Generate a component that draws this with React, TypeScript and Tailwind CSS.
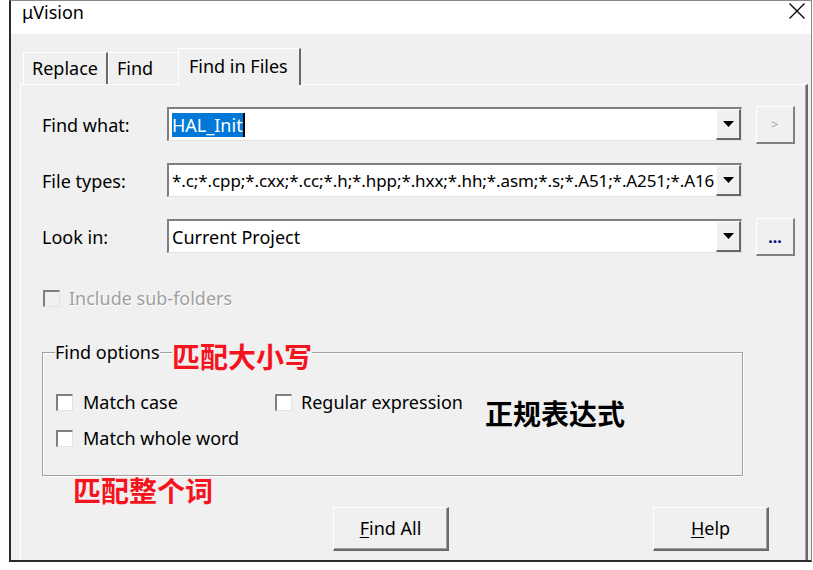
import React from "react";

function ComboBox({ children }: { children: React.ReactNode }) {
  return (
    <div className="mt-[1px] flex h-[34px] w-[575px] border-t-2 border-l-2 border-r border-b border-t-[#7f7f7f] border-l-[#7f7f7f] border-r-[#e3e3e3] border-b-[#e3e3e3] bg-white">
      <div className="flex min-w-0 flex-1 items-center overflow-hidden whitespace-nowrap pl-[3px] text-[18px] leading-[24px]">
        {children}
      </div>
      <div className="flex w-[25px] items-center justify-center border-t border-l border-r-2 border-b-2 border-t-white border-l-white border-r-[#696969] border-b-[#696969] bg-[#f0f0f0]">
        <svg width="11" height="6" viewBox="0 0 11 6">
          <polygon points="0,0 11,0 5.5,6" fill="#000" />
        </svg>
      </div>
    </div>
  );
}

function SideButton({ children, disabled }: { children: React.ReactNode; disabled?: boolean }) {
  return (
    <div
      className={`flex h-[38px] w-[39px] items-center justify-center border-t border-l border-r-2 border-b-2 border-t-white border-l-white border-r-[#808080] border-b-[#808080] bg-[#f0f0f0] ${
        disabled ? "text-[13px] text-[#a0a0a0] [text-shadow:1px_1px_0_#fff]" : "text-[16px] font-bold text-[#000080]"
      }`}
    >
      {children}
    </div>
  );
}

function CheckBox({ disabled }: { disabled?: boolean }) {
  return (
    <div
      className={`h-[17px] w-[17px] shrink-0 border-t-2 border-l-2 border-r border-b border-t-[#7f7f7f] border-l-[#7f7f7f] border-r-[#e3e3e3] border-b-[#e3e3e3] ${
        disabled ? "bg-[#f0f0f0]" : "bg-white"
      }`}
    />
  );
}

function PushButton({ hot, rest }: { hot: string; rest: string }) {
  return (
    <div className="flex h-[44px] w-[116px] items-center justify-center border-t border-l border-r-2 border-b-2 border-t-white border-l-white border-r-[#6b6b6b] border-b-[#6b6b6b] bg-[#f0f0f0] text-[18px] shadow-[inset_-1px_-1px_0_#a0a0a0]">
      <span className="underline underline-offset-2">{hot}</span>
      {rest}
    </div>
  );
}

export default function App() {
  return (
    <div className="h-[570px] w-[813px] bg-white font-['Noto_Sans','Noto_Sans_CJK_SC',sans-serif] text-black">
      <div className="ml-[9px] flex h-[562px] w-[803px] flex-col border-l-2 border-t border-r border-b-2 border-l-[#2b2b2b] border-t-[#8a8a8a] border-r-[#8a8a8a] border-b-[#2b2b2b]">
        {/* Title bar */}
        <div className="flex h-[33px] items-start justify-between bg-white pl-[11px] pr-[6px]">
          <span className="text-[18px] leading-[22px]">μVision</span>
          <svg width="16" height="16" viewBox="0 0 16 16" className="mt-[2px]">
            <path d="M0.5 0.5 L15.5 15.5 M15.5 0.5 L0.5 15.5" stroke="#000" strokeWidth="1.3" />
          </svg>
        </div>

        <div className="flex flex-1 flex-col bg-[#f0f0f0]">
          {/* Tabs */}
          <div className="mt-[14px] flex items-end pl-[12px] text-[18px]">
            <div className="flex h-[32px] w-[85px] items-center border-t border-l border-r-2 border-t-white border-l-white border-r-[#696969] pl-[8px]">
              Replace
            </div>
            <div className="flex h-[32px] w-[70px] items-center border-t border-l border-t-white border-l-white pl-[8px]">
              Find
            </div>
            <div className="relative z-10 -mb-px flex h-[37px] w-[123px] items-center border-t border-l border-r-2 border-t-white border-l-white border-r-[#696969] bg-[#f0f0f0] pl-[10px] pb-[1px]">
              Find in Files
            </div>
          </div>

          {/* Tab page */}
          <div className="mr-[3px] ml-[9px] flex flex-1 flex-col border-t border-l border-r-2 border-t-white border-l-white border-r-[#696969] pl-[21px] pt-[21px] text-[18px] shadow-[inset_-1px_0_0_#a0a0a0]">
            <div className="grid grid-cols-[111px_575px_39px] gap-x-[14px] gap-y-[18px]">
              <span className="self-center leading-[24px]">Find what:</span>
              <div className="h-[38px]">
                <ComboBox>
                  <span className="bg-[#0078d7] text-white">HAL_Init</span>
                  <span className="h-[24px] w-[2px] bg-black" />
                </ComboBox>
              </div>
              <SideButton disabled>&gt;</SideButton>

              <span className="self-center leading-[24px]">File types:</span>
              <div className="h-[38px]">
                <ComboBox>
                  <span className="text-[17px] tracking-[-0.1px]">
                    *.c;*.cpp;*.cxx;*.cc;*.h;*.hpp;*.hxx;*.hh;*.asm;*.s;*.A51;*.A251;*.A16
                  </span>
                </ComboBox>
              </div>
              <div />

              <span className="self-center leading-[24px]">Look in:</span>
              <div className="h-[38px]">
                <ComboBox>Current Project</ComboBox>
              </div>
              <SideButton>...</SideButton>
            </div>

            <div className="mt-[32px] flex h-[20px] items-center gap-[9px] pl-[1px]">
              <CheckBox disabled />
              <span className="text-[#a0a0a0] [text-shadow:1px_1px_0_#fff]">Include sub-folders</span>
            </div>

            {/* Find options group */}
            <fieldset className="mt-[34px] w-[701px] border border-[#a0a0a0] pl-[12px] pb-[27px] shadow-[inset_1px_1px_0_#fff,1px_1px_0_#fff]">
              <legend className="relative leading-[20px]">
                <span className="bg-[#f0f0f0]">Find options</span>
                <span className="absolute top-[2px] left-[117px] bg-[#f0f0f0] text-[28px] leading-[26px] font-bold whitespace-nowrap text-[#f5141e]">
                  匹配大小写
                </span>
              </legend>
              <div className="pt-[30px]">
                <div className="flex h-[20px] items-center pl-[1px]">
                  <div className="flex w-[219px] items-center gap-[10px]">
                    <CheckBox />
                    <span>Match case</span>
                  </div>
                  <div className="flex items-center gap-[9px]">
                    <CheckBox />
                    <span>Regular expression</span>
                  </div>
                  <span className="relative top-[12px] ml-[22px] text-[28px] leading-[28px] font-bold whitespace-nowrap">
                    正规表达式
                  </span>
                </div>
                <div className="mt-[16px] flex h-[20px] items-center gap-[10px] pl-[1px]">
                  <CheckBox />
                  <span>Match whole word</span>
                </div>
              </div>
            </fieldset>

            <div className="mt-[2px] ml-[31px] text-[28px] leading-[26px] font-bold text-[#f5141e]">匹配整个词</div>

            <div className="mt-[3px] flex">
              <div className="ml-[291px]">
                <PushButton hot="F" rest="ind All" />
              </div>
              <div className="ml-[204px]">
                <PushButton hot="H" rest="elp" />
              </div>
            </div>
          </div>
        </div>
      </div>
    </div>
  );
}
